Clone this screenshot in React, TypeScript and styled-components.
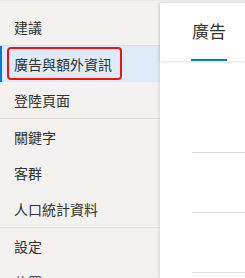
import React from 'react'
import styled, { createGlobalStyle } from 'styled-components'

const GlobalStyle = createGlobalStyle`
  html, body {
    margin: 0;
    padding: 0;
    background: #f3f2f1;
    font-family: "Noto Sans CJK TC", "Noto Sans", sans-serif;
    overflow: hidden;
  }
`

const groups = [
  ['建議'],
  ['廣告與額外資訊', '登陸頁面'],
  ['關鍵字', '客群', '人口統計資料'],
  ['設定', '位置']
]

const selected = '廣告與額外資訊'

export default function App() {
  return (
    <>
      <GlobalStyle />
      <Layout>
        <Sidebar>
          {groups.map((group, i) => (
            <Group key={i} first={i === 0}>
              {group.map((label) => (
                <NavItem key={label} active={label === selected}>
                  {label}
                  {label === selected && <Highlight />}
                </NavItem>
              ))}
            </Group>
          ))}
        </Sidebar>
        <Panel>
          <Header>
            <Tab>廣告</Tab>
          </Header>
          <Content>
            <Row />
            <Row />
            <Row />
          </Content>
        </Panel>
      </Layout>
    </>
  )
}

const Layout = styled.div`
  display: flex;
  height: 278px;
  padding-top: 2px;
  box-sizing: border-box;
  border-top: 1px solid #ebe9e7;
`

const Sidebar = styled.nav`
  width: 160px;
  flex-shrink: 0;
  padding-top: 6px;
  background: #f3f2f1;
`

const Group = styled.div<{ first?: boolean }>`
  border-top: ${(p) => (p.first ? 'none' : '1px solid #e1dfdd')};
`

const NavItem = styled.div<{ active?: boolean }>`
  position: relative;
  display: flex;
  align-items: center;
  height: 36px;
  padding-left: 14px;
  font-size: 14px;
  color: #323130;
  background: ${(p) => (p.active ? '#deecf9' : 'transparent')};
  border-left: 2px solid ${(p) => (p.active ? '#0078d4' : 'transparent')};
  margin-left: 0;
  padding-left: 12px;
`

const Highlight = styled.span`
  position: absolute;
  left: 5px;
  top: 1px;
  width: 111px;
  height: 29px;
  border: 2.5px solid #fb0d0d;
  border-radius: 4px;
`

const Panel = styled.main`
  flex: 1;
  background: #ffffff;
  box-shadow: -1px 0 3px rgba(0, 0, 0, 0.12);
  display: flex;
  flex-direction: column;
  z-index: 1;
`

const Header = styled.header`
  height: 58px;
  display: flex;
  padding-left: 31px;
  box-shadow: 0 1px 3px rgba(0, 0, 0, 0.12);
  position: relative;
`

const Tab = styled.div`
  display: flex;
  align-items: center;
  padding: 0 1px;
  font-size: 17px;
  color: #323130;
  border-bottom: 2px solid #0078d4;
  box-sizing: border-box;
  height: 58px;
  padding-bottom: 2px;
`

const Content = styled.div`
  display: flex;
  flex-direction: column;
  padding-top: 91px;
  padding-left: 32px;
  gap: 59px;
`

const Row = styled.div`
  border-top: 1px solid #e1dfdd;
`
